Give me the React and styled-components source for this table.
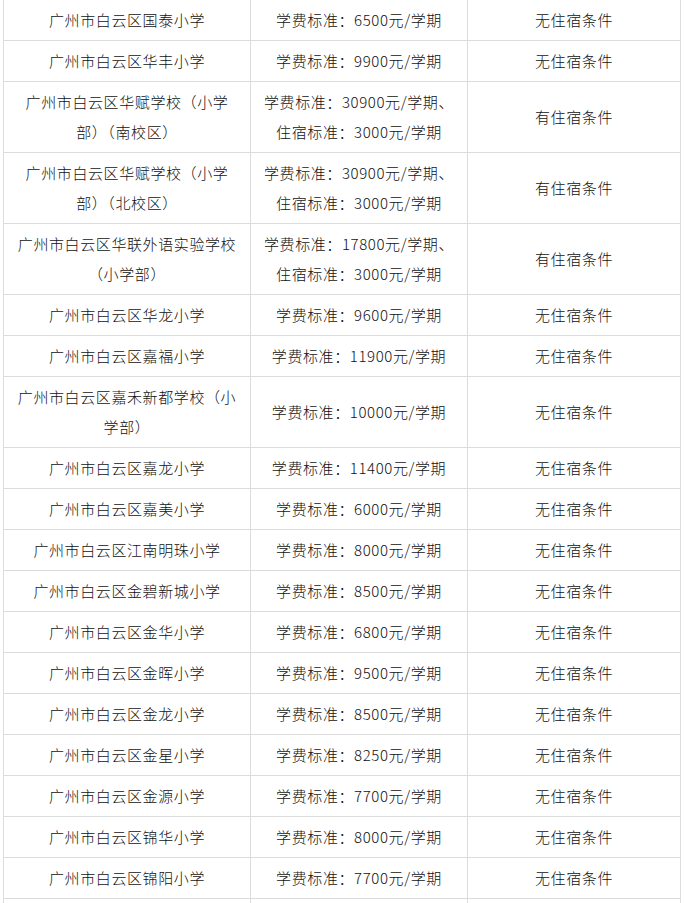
import React from "react";
import styled, { createGlobalStyle } from "styled-components";

const Global = createGlobalStyle`
  html, body { margin: 0; padding: 0; background: #fff; }
  body { font-family: "Noto Sans CJK SC", "Noto Sans", sans-serif; }
`;

const Page = styled.div`
  padding-left: 3px;
  margin-top: -1px;
`;

const Table = styled.table`
  border-collapse: collapse;
  table-layout: fixed;
  width: 677px;
  color: #111;
  font-size: 15px;
  font-weight: 300;
  letter-spacing: 0.6px;
`;

const Col = styled.col`
  width: ${(p) => p.$w}px;
`;

const Cell = styled.td`
  border: 1px solid #dcdcdc;
  text-align: center;
  vertical-align: middle;
  line-height: 30px;
  height: 30px;
  padding: 5px ${(p) => p.$pad || 10}px;
  word-break: normal;
`;

const rows = [
  ["广州市白云区国泰小学", ["学费标准：6500元/学期"], "无住宿条件"],
  ["广州市白云区华丰小学", ["学费标准：9900元/学期"], "无住宿条件"],
  ["广州市白云区华赋学校（小学部）（南校区）", ["学费标准：30900元/学期、", "住宿标准：3000元/学期"], "有住宿条件"],
  ["广州市白云区华赋学校（小学部）（北校区）", ["学费标准：30900元/学期、", "住宿标准：3000元/学期"], "有住宿条件"],
  ["广州市白云区华联外语实验学校（小学部）", ["学费标准：17800元/学期、", "住宿标准：3000元/学期"], "有住宿条件"],
  ["广州市白云区华龙小学", ["学费标准：9600元/学期"], "无住宿条件"],
  ["广州市白云区嘉福小学", ["学费标准：11900元/学期"], "无住宿条件"],
  ["广州市白云区嘉禾新都学校（小学部）", ["学费标准：10000元/学期"], "无住宿条件"],
  ["广州市白云区嘉龙小学", ["学费标准：11400元/学期"], "无住宿条件"],
  ["广州市白云区嘉美小学", ["学费标准：6000元/学期"], "无住宿条件"],
  ["广州市白云区江南明珠小学", ["学费标准：8000元/学期"], "无住宿条件"],
  ["广州市白云区金碧新城小学", ["学费标准：8500元/学期"], "无住宿条件"],
  ["广州市白云区金华小学", ["学费标准：6800元/学期"], "无住宿条件"],
  ["广州市白云区金晖小学", ["学费标准：9500元/学期"], "无住宿条件"],
  ["广州市白云区金龙小学", ["学费标准：8500元/学期"], "无住宿条件"],
  ["广州市白云区金星小学", ["学费标准：8250元/学期"], "无住宿条件"],
  ["广州市白云区金源小学", ["学费标准：7700元/学期"], "无住宿条件"],
  ["广州市白云区锦华小学", ["学费标准：8000元/学期"], "无住宿条件"],
  ["广州市白云区锦阳小学", ["学费标准：7700元/学期"], "无住宿条件"],
  ["", [""], ""],
];

export default function App() {
  return (
    <>
      <Global />
      <Page>
        <Table>
          <colgroup>
            <Col $w={247} />
            <Col $w={217} />
            <Col $w={213} />
          </colgroup>
          <tbody>
            {rows.map((r, i) => (
              <tr key={i}>
                <Cell>{r[0]}</Cell>
                <Cell $pad={6}>
                  {r[1].map((l, j) => (
                    <React.Fragment key={j}>
                      {j > 0 && <br />}
                      {l}
                    </React.Fragment>
                  ))}
                </Cell>
                <Cell>{r[2]}</Cell>
              </tr>
            ))}
          </tbody>
        </Table>
      </Page>
    </>
  );
}
